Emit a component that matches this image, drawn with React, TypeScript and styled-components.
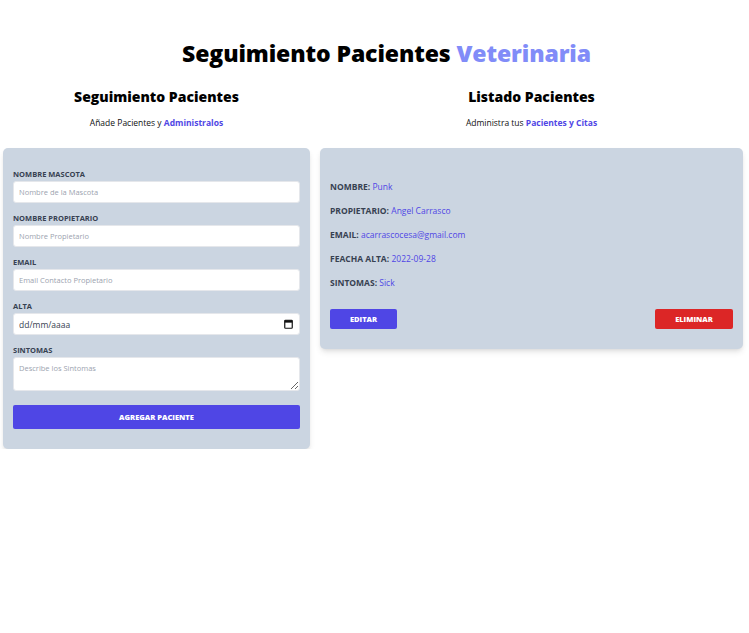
import React from "react";
import styled, { createGlobalStyle } from "styled-components";

const Global = createGlobalStyle`
  html, body { margin: 0; padding: 0; background: #ffffff; }
  body { font-family: "Open Sans", "Noto Sans", sans-serif; color: #000; }
  * { box-sizing: border-box; }
`;

const Page = styled.div`
  padding-top: 38px;
`;

const Title = styled.h1`
  margin: 0 0 0 24px;
  text-align: center;
  font-size: 23px;
  font-weight: 800;
  line-height: 30px;
  letter-spacing: -0.1px;
`;

const Accent = styled.span`
  color: #818cf8;
`;

const Columns = styled.div`
  display: flex;
  align-items: flex-start;
  margin-top: 19px;
`;

const Column = styled.div<{ $w: string; $pl: number; $pr: number }>`
  width: ${(p) => p.$w};
  padding-left: ${(p) => p.$pl}px;
  padding-right: ${(p) => p.$pr}px;
`;

const ColTitle = styled.h2`
  margin: 0;
  text-align: center;
  font-size: 14px;
  font-weight: 800;
  line-height: 20px;
`;

const Sub = styled.p`
  margin: 9px 0 0;
  text-align: center;
  font-size: 8.5px;
  line-height: 14px;
  color: #111;
`;

const Link = styled.span`
  color: #4f46e5;
  font-weight: 700;
`;

const Panel = styled.div<{ $pt: number; $pb: number }>`
  margin-top: 18px;
  background: #cbd5e1;
  border-radius: 5px;
  box-shadow: 0 4px 6px -1px rgba(0, 0, 0, 0.1), 0 2px 4px -2px rgba(0, 0, 0, 0.1);
  padding: ${(p) => p.$pt}px 10px ${(p) => p.$pb}px;
`;

const Field = styled.div`
  margin-bottom: 10px;
`;

const Label = styled.label`
  display: block;
  font-size: 7.5px;
  font-weight: 700;
  text-transform: uppercase;
  color: #374151;
  line-height: 11px;
  margin-bottom: 1px;
`;

const Input = styled.input`
  display: block;
  width: 100%;
  height: 22px;
  border: 1px solid #e5e7eb;
  border-radius: 3px;
  background: #fff;
  padding: 0 5px;
  font-family: "Open Sans", sans-serif;
  font-size: 7.5px;
  color: #374151;
  outline: none;
  &::placeholder { color: #9ca3af; }
`;

const DateBox = styled.div`
  display: flex;
  align-items: center;
  justify-content: space-between;
  height: 22px;
  border: 1px solid #e5e7eb;
  border-radius: 3px;
  background: #fff;
  padding: 0 6px 0 5px;
`;

const DateText = styled.input`
  flex: 1;
  min-width: 0;
  border: none;
  outline: none;
  background: transparent;
  padding: 0;
  font-family: "Open Sans", sans-serif;
  font-size: 8.5px;
  color: #374151;
  &::placeholder { color: #374151; }
`;

const TextArea = styled.textarea`
  display: block;
  width: 100%;
  height: 34px;
  border: 1px solid #e5e7eb;
  border-radius: 3px;
  background: #fff;
  padding: 5px 5px;
  font-family: "Open Sans", sans-serif;
  font-size: 7.5px;
  outline: none;
  resize: vertical;
  &::placeholder { color: #9ca3af; }
`;

const Button = styled.button<{ $bg: string; $w?: string }>`
  display: block;
  width: ${(p) => p.$w || "100%"};
  height: ${(p) => (p.$w ? "20px" : "24px")};
  margin-top: ${(p) => (p.$w ? "0" : "14px")};
  background: ${(p) => p.$bg};
  color: #fff;
  border: none;
  border-radius: 2px;
  font-family: "Open Sans", sans-serif;
  font-size: 7.5px;
  font-weight: 800;
  text-transform: uppercase;
  cursor: pointer;
`;

const Spacer = styled.div`
  height: 12px;
`;

const Row = styled.p`
  margin: 0 0 11px;
  font-size: 8.5px;
  line-height: 13px;
`;

const Key = styled.span`
  font-weight: 700;
  color: #374151;
  text-transform: uppercase;
`;

const Val = styled.span`
  color: #4f46e5;
  font-weight: 400;
`;

const Actions = styled.div`
  display: flex;
  justify-content: space-between;
  margin-top: 20px;
`;

const CalendarIcon = () => (
  <svg width="9" height="10" viewBox="0 0 9 10" aria-hidden="true">
    <rect x="0.75" y="1.25" width="7.5" height="8" rx="0.8" fill="none" stroke="#111" strokeWidth="1.2" />
    <rect x="0.75" y="1.25" width="7.5" height="2.4" fill="#111" />
  </svg>
);

const data: [string, string][] = [
  ["Nombre", "Punk"],
  ["Propietario", "Angel Carrasco"],
  ["Email", "acarrascocesa@gmail.com"],
  ["Feacha Alta", "2022-09-28"],
  ["Sintomas", "Sick"],
];

export default function App() {
  return (
    <>
      <Global />
      <Page>
        <Title>
          Seguimiento Pacientes <Accent>Veterinaria</Accent>
        </Title>
        <Columns>
          <Column $w="315px" $pl={3} $pr={5}>
            <ColTitle>Seguimiento Pacientes</ColTitle>
            <Sub>
              Añade Pacientes y <Link>Administralos</Link>
            </Sub>
            <Panel $pt={21} $pb={20}>
              <Field>
                <Label>Nombre Mascota</Label>
                <Input placeholder="Nombre de la Mascota" />
              </Field>
              <Field>
                <Label>Nombre Propietario</Label>
                <Input placeholder="Nombre Propietario" />
              </Field>
              <Field>
                <Label>Email</Label>
                <Input placeholder="Email Contacto Propietario" />
              </Field>
              <Field>
                <Label>Alta</Label>
                <DateBox>
                  <DateText placeholder="dd/mm/aaaa" />
                  <CalendarIcon />
                </DateBox>
              </Field>
              <Field>
                <Label>Sintomas</Label>
                <TextArea placeholder="Describe los Sintomas" />
              </Field>
              <Button $bg="#4f46e5">Agregar Paciente</Button>
            </Panel>
          </Column>
          <Column $w="434px" $pl={5} $pr={6}>
            <ColTitle>Listado Pacientes</ColTitle>
            <Sub>
              Administra tus <Link>Pacientes y Citas</Link>
            </Sub>
            <Panel $pt={20} $pb={20}>
              <Spacer />
              {data.map(([k, v]) => (
                <Row key={k}>
                  <Key>{k}:</Key> <Val>{v}</Val>
                </Row>
              ))}
              <Actions>
                <Button $bg="#4f46e5" $w="67px">Editar</Button>
                <Button $bg="#dc2626" $w="78px">Eliminar</Button>
              </Actions>
            </Panel>
          </Column>
        </Columns>
      </Page>
    </>
  );
}
